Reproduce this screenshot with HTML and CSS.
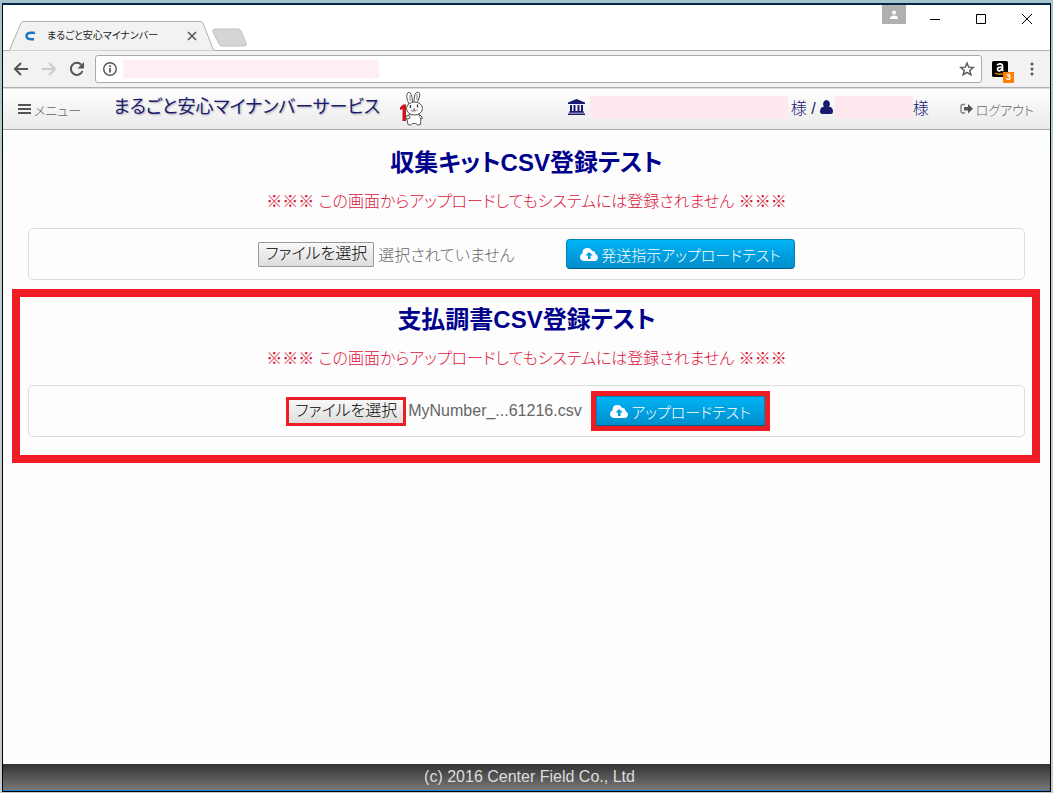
FILE: index.html
```html
<!DOCTYPE html>
<html lang="ja">
<head>
<meta charset="utf-8">
<title>まるごと安心マイナンバー</title>
<link rel="stylesheet" href="styles.css">
</head>
<body>
<div class="window">
  <div class="tabstrip">
    <div class="tab">
      <svg class="tab-shape" viewBox="0 0 206 30" preserveAspectRatio="none" aria-hidden="true"><path d="M0 29.500L1 28L12 2Q13 .5 14 .5H191Q193 .5 194 2L204 28L206 29.500" fill="#f2f2f2" stroke="#b0b0b0"/></svg>
      <svg class="favicon" viewBox="0 0 16 16" aria-hidden="true"><path d="M12 4.800H7Q2.500 5 2.500 8T7 11.200h3" fill="none" stroke="#1d74c0" stroke-width="2.400"/><path d="M10 3.500l5-1-3 4z" fill="#e3f0f8"/></svg>
      <span class="tab-title">まるごと安心マイナンバー</span>
      <button class="icon-btn" aria-label="タブを閉じる"><svg width="10" height="10" viewBox="0 0 10 10"><path d="M1 1l8 8M9 1L1 9" stroke="#555" stroke-width="1.600"/></svg></button>
    </div>
    <button class="icon-btn new-tab" aria-label="新しいタブ"><svg width="36" height="19" viewBox="0 0 36 19"><path d="M3 1H26Q28 1 29 3L34 15Q35 18 32 18H10Q8 18 7 16L1 4Q0 1 3 1Z" fill="#d5d5d5" stroke="#c0c0c0"/></svg></button>
    <div class="win-controls">
      <button class="icon-btn profile" aria-label="プロフィール"><svg width="10" height="10" viewBox="0 0 10 10"><circle cx="5" cy="2.500" r="2" fill="#fff"/><path d="M1 9V7.500Q2 5.500 5 5.500T9 7.500V9Z" fill="#fff"/></svg></button>
      <button class="icon-btn win-btn" aria-label="最小化"><svg width="12" height="12" viewBox="0 0 12 12"><path d="M1 6.500h10" stroke="#000"/></svg></button>
      <button class="icon-btn win-btn" aria-label="最大化"><svg width="12" height="12" viewBox="0 0 12 12"><path d="M1.500 1.500h9v9h-9z" fill="none" stroke="#000"/></svg></button>
      <button class="icon-btn win-btn" aria-label="閉じる"><svg width="12" height="12" viewBox="0 0 12 12"><path d="M1 1l10 10M11 1L1 11" stroke="#000"/></svg></button>
    </div>
  </div>

  <div class="toolbar">
    <div class="nav-buttons">
      <button class="icon-btn" aria-label="戻る"><svg width="16" height="16" viewBox="0 0 16 16"><path d="M15 8H2M8 2L2 8l6 6" fill="none" stroke="#555" stroke-width="2"/></svg></button>
      <button class="icon-btn" aria-label="進む"><svg width="16" height="16" viewBox="0 0 16 16"><path d="M1 8h13M8 2l6 6-6 6" fill="none" stroke="#ccc" stroke-width="2"/></svg></button>
      <button class="icon-btn" aria-label="再読み込み"><svg width="16" height="16" viewBox="0 0 16 16"><path d="M13.500 10A6 6 0 1 1 12.300 3.800" fill="none" stroke="#555" stroke-width="2"/><path d="M15 1v6.500H8.500Z" fill="#555"/></svg></button>
    </div>
    <div class="address">
      <svg width="16" height="16" viewBox="0 0 16 16" aria-hidden="true"><circle cx="8" cy="8" r="6.300" fill="none" stroke="#555" stroke-width="1.400"/><path d="M8 7v4.500M8 4.200v1.800" stroke="#555" stroke-width="1.700"/></svg>
      <input class="url" type="text" aria-label="アドレス">
      <button class="icon-btn star" aria-label="ブックマーク"><svg width="16" height="16" viewBox="0 0 16 16"><path d="M8 2l1.700 4.200 4.500.3-3.500 2.900 1.200 4.400L8 11.300l-3.900 2.500 1.200-4.400L1.800 6.500l4.500-.3Z" fill="none" stroke="#555" stroke-width="1.400"/></svg></button>
    </div>
    <button class="icon-btn extension" aria-label="拡張機能">
      <svg width="16" height="16" viewBox="0 0 16 16"><rect width="16" height="16" rx="1.500"/><path d="M5 4.200Q6 2.800 8 2.800q2.500 0 2.500 2.200v4l.8 1M10.300 6Q5.300 6 5.500 8.500q.5 1.800 2.500 1.200 2.300-.8 2.300-3.700" fill="none" stroke="#fff" stroke-width="1.700"/><path d="M3 12q5 2.500 10 0" fill="none" stroke="#f90" stroke-width="1.300"/></svg>
      <span class="badge">3</span>
    </button>
    <button class="icon-btn more" aria-label="メニュー"><svg width="4" height="14" viewBox="0 0 4 14"><g fill="#555"><circle cx="2" cy="2" r="1.500"/><circle cx="2" cy="7" r="1.500"/><circle cx="2" cy="12" r="1.500"/></g></svg></button>
  </div>

  <header class="navbar">
    <button class="nav-item"><svg width="13" height="12" viewBox="0 0 13 12"><path d="M0 2h13M0 6h13M0 10h13" stroke="#555" stroke-width="2"/></svg>メニュー</button>
    <a class="brand" href="#">まるごと安心マイナンバーサービス</a>
    <svg class="rabbit" width="26" height="36" viewBox="0 0 26 36" aria-hidden="true">
      <g fill="#fff" stroke="#555" stroke-width="1">
        <path d="M8 24Q6 28 8 33.500q3 1.800 4.500-1h3q2 2.500 5 1Q22 28 19 23Z"/>
        <path d="M9 13Q5 5 8 1.500q4-1.500 4.500 10M14 11.500Q14 1 18 1q3 1 1 6-1 3-2 5"/>
        <ellipse cx="14.500" cy="17.500" rx="8" ry="6.500"/>
        <path d="M20 24q3 2 2 4l-2-1"/>
      </g>
      <path d="M10 4v6M17 3v6" stroke="#888"/>
      <path d="M10.500 14v3M17.500 13.500v3" stroke="#333" stroke-width="1.300"/>
      <path d="M11 19q1.500 2.500 3 .5 1.500 1.500 3-1M13 18h2" fill="none" stroke="#555"/>
      <path d="M6 25q3-1 4 1t-4 2Z" fill="#fff" stroke="#555"/>
      <path d="M0 16.500L3 13.500H6V30H2.500V18L0 19Z" fill="#c9151e"/>
    </svg>
    <div class="account">
      <svg width="17" height="16" viewBox="0 0 17 16" aria-hidden="true"><g fill="#191970"><path d="M8.500 0L17 3.500V5H0V3.500ZM2 6h2v6h1.500V6h2v6H9.500V6h2v6H13V6h2v6l1 1v.8H1V13l1-1ZM0 14.500h17V16H0Z"/></g></svg>
      <span class="masked company"></span>
      <span class="honorific">様 /</span>
      <svg width="13" height="14" viewBox="0 0 13 14" aria-hidden="true"><path d="M6.500 0A3.500 3.800 0 0 1 8.800 6.600Q13 7 13 11.500 13 14 10.500 14h-8Q0 14 0 11.500 0 7 4.200 6.600A3.500 3.800 0 0 1 6.500 0Z" fill="#191970"/></svg>
      <span class="masked person"></span>
      <span>様</span>
    </div>
    <button class="nav-item"><svg width="13" height="12" viewBox="0 0 13 12"><path d="M5 1.500H2.500q-1.500 0-1.500 1.500v5.500Q1 10 2.500 10H5" fill="none" stroke="#777" stroke-width="1.300"/><path d="M4 4h4V1l5 4.800-5 4.700V7.500H4Z" fill="#555"/></svg>ログアウト</button>
  </header>

  <main class="content">
    <section class="block">
      <h2>収集キットCSV登録テスト</h2>
      <p class="warning">※※※ この画面からアップロードしてもシステムには登録されません ※※※</p>
      <div class="panel">
        <button class="file-btn">ファイルを選択</button>
        <span class="file-name">選択されていません</span>
        <button class="upload-btn"><svg width="18" height="13" viewBox="0 0 18 13" aria-hidden="true"><path fill-rule="evenodd" d="M4 13Q0 12.500 0 9 0 6.500 2.500 5.300 2.300 0 7.500 0q3.500 0 4.500 3.200Q15 2.500 15.500 6 18 7 18 9.500 17.500 13 14.500 13ZM9 4L5.500 7.500H8V11h2.500V7.500H13Z" fill="#fff"/></svg>発送指示アップロードテスト</button>
      </div>
    </section>

    <section class="block highlighted">
      <h2>支払調書CSV登録テスト</h2>
      <p class="warning">※※※ この画面からアップロードしてもシステムには登録されません ※※※</p>
      <div class="panel">
        <button class="file-btn marked-file">ファイルを選択</button>
        <span class="file-name">MyNumber_...61216.csv</span>
        <button class="upload-btn marked-upload"><svg width="18" height="13" viewBox="0 0 18 13" aria-hidden="true"><path fill-rule="evenodd" d="M4 13Q0 12.500 0 9 0 6.500 2.500 5.300 2.300 0 7.500 0q3.500 0 4.500 3.200Q15 2.500 15.500 6 18 7 18 9.500 17.500 13 14.500 13ZM9 4L5.500 7.500H8V11h2.500V7.500H13Z" fill="#fff"/></svg>アップロードテスト</button>
      </div>
    </section>
  </main>

  <footer class="footer">(c) 2016 Center Field Co., Ltd</footer>
</div>
</body>
</html>
```
FILE: styles.css
```css
* { box-sizing: border-box; }

body {
  margin: 0;
  min-height: 100vh;
  padding: 3px 2px 1px;
  display: flex;
  background: linear-gradient(#a5c3cc, #c0cdd2 25%, #c4ced2);
  font-family: "Liberation Sans", "Noto Sans CJK JP", sans-serif;
  font-size: 16px;
  font-weight: 300;
  font-feature-settings: "palt";
  color: #666;
}

button {
  font: inherit;
  font-feature-settings: inherit;
  color: inherit;
  cursor: pointer;
  white-space: nowrap;
}

svg { flex: none; display: block; }

.window {
  flex: 1;
  min-width: 0;
  display: flex;
  flex-direction: column;
  background: #fdfdfd;
  border: 1px solid #000;
  border-top-width: 2px;
  border-top-color: #06264a;
}

.icon-btn {
  display: flex;
  align-items: center;
  justify-content: center;
  padding: 0;
  border: 0;
  background: none;
}

/* browser chrome */
.tabstrip {
  display: flex;
  align-items: flex-end;
  height: 46px;
  background: linear-gradient(#b0b0b0, #b0b0b0) bottom / 100% 1px no-repeat #fff;
  padding-left: 6px;
}

.tab {
  position: relative;
  display: flex;
  align-items: center;
  width: 206px;
  height: 30px;
  padding: 0 18px 0 15px;
}

.tab-shape { position: absolute; inset: 0; width: 100%; height: 100%; }
.favicon { position: relative; width: 16px; height: 16px; margin-right: 7px; }

.tab-title {
  position: relative;
  flex: 1;
  font-size: 10px;
  line-height: 16px;
  font-weight: 400;
  color: #222;
  white-space: nowrap;
}

.tab .icon-btn { position: relative; }
.new-tab { padding-bottom: 4px; margin-left: -3px; }

.win-controls {
  display: flex;
  align-self: flex-start;
  margin-left: auto;
}

.profile { width: 24px; height: 19px; background: #b0b0b0; margin-right: 6px; }
.win-btn { width: 46px; height: 28px; }

.toolbar {
  display: flex;
  align-items: center;
  height: 37px;
  padding: 0 16px 0 10px;
  background: #f2f2f2;
  border-bottom: 1px solid #b0b0b0;
}

.nav-buttons { display: flex; gap: 12px; margin-right: 10px; }

.address {
  flex: 1;
  display: flex;
  align-items: center;
  height: 28px;
  padding: 0 6px;
  background: #fff;
  border: 1px solid #aaa;
  border-radius: 3px;
}

.url {
  width: 256px;
  height: 18px;
  margin-left: 5px;
  padding: 0;
  border: 0;
  background: #ffeff2;
}

.star { margin-left: auto; }
.extension { position: relative; margin: 0 22px 0 10px; }

.badge {
  position: absolute;
  left: 11px;
  top: 11px;
  width: 11px;
  background: #ff8000;
  color: #fff;
  font-size: 9px;
  font-weight: bold;
  line-height: 11px;
}

/* application header */
.navbar {
  display: flex;
  align-items: center;
  height: 42px;
  padding: 0 16px 0 15px;
  background: linear-gradient(#fff, #eaeaea);
  border-top: 1px solid #ddd;
  border-bottom: 1px solid #aaa;
}

.nav-item {
  display: flex;
  align-items: center;
  gap: 3px;
  padding: 0;
  border: 0;
  background: none;
  font-size: 13px;
}

.brand {
  margin: 0 20px 4px 32px;
  font-size: 18px;
  line-height: 28px;
  font-weight: 400;
  color: #191970;
  text-decoration: none;
  text-shadow: 1px 1px 2px #aaa;
  white-space: nowrap;
}

.account {
  display: flex;
  align-items: center;
  margin: 0 31px 4px auto;
  color: #191970;
  white-space: nowrap;
}

.masked { height: 22px; background: #ffe7ee; }
.company { width: 198px; margin: 0 3px 0 5px; }
.person { width: 78px; margin-left: 2px; }
.honorific { margin-right: 4px; }

/* page content */
.content { flex: 1; padding-top: 9px; }

.block { margin: 0 9px 9px; padding: 8px 16px 0; text-align: center; }

.highlighted {
  margin-right: 10px;
  padding: 7px 7px 18px 8px;
  border: 8px solid #ee1c25;
}

h2 {
  margin: 0 0 11px;
  font-size: 24px;
  line-height: 32px;
  color: #00008b;
}

.warning {
  margin: 0 0 14px;
  line-height: 24px;
  color: #dc143c;
}

.panel {
  display: flex;
  align-items: center;
  justify-content: center;
  gap: 4px;
  height: 52px;
  border: 1px solid #ddd;
  border-radius: 5px;
}

.file-btn {
  width: 116px;
  height: 25px;
  padding: 0;
  border: 1px solid #999;
  border-radius: 1px;
  background: linear-gradient(#f8f8f8, #ddd);
  line-height: 20px;
  color: #000;
}

.file-name { width: 184px; text-align: left; white-space: nowrap; }

.upload-btn {
  display: flex;
  align-items: center;
  gap: 3px;
  height: 30px;
  padding: 0 13px;
  border: 1px solid #0084b8;
  border-bottom-color: #00608a;
  border-radius: 4px;
  background: linear-gradient(#00b4f5, #008dcc);
  font-size: 15px;
  color: #fff;
}

.marked-file { outline: 3px solid #ee1c25; outline-offset: -1px; border-radius: 0; }
.marked-upload { outline: 5px solid #ee1c25; border-radius: 0; }

.footer {
  height: 27px;
  padding-left: 6px;
  line-height: 25px;
  text-align: center;
  color: #ddd;
  background: linear-gradient(#333, #777);
  border-bottom: 1px solid #1f83d8;
}
```
